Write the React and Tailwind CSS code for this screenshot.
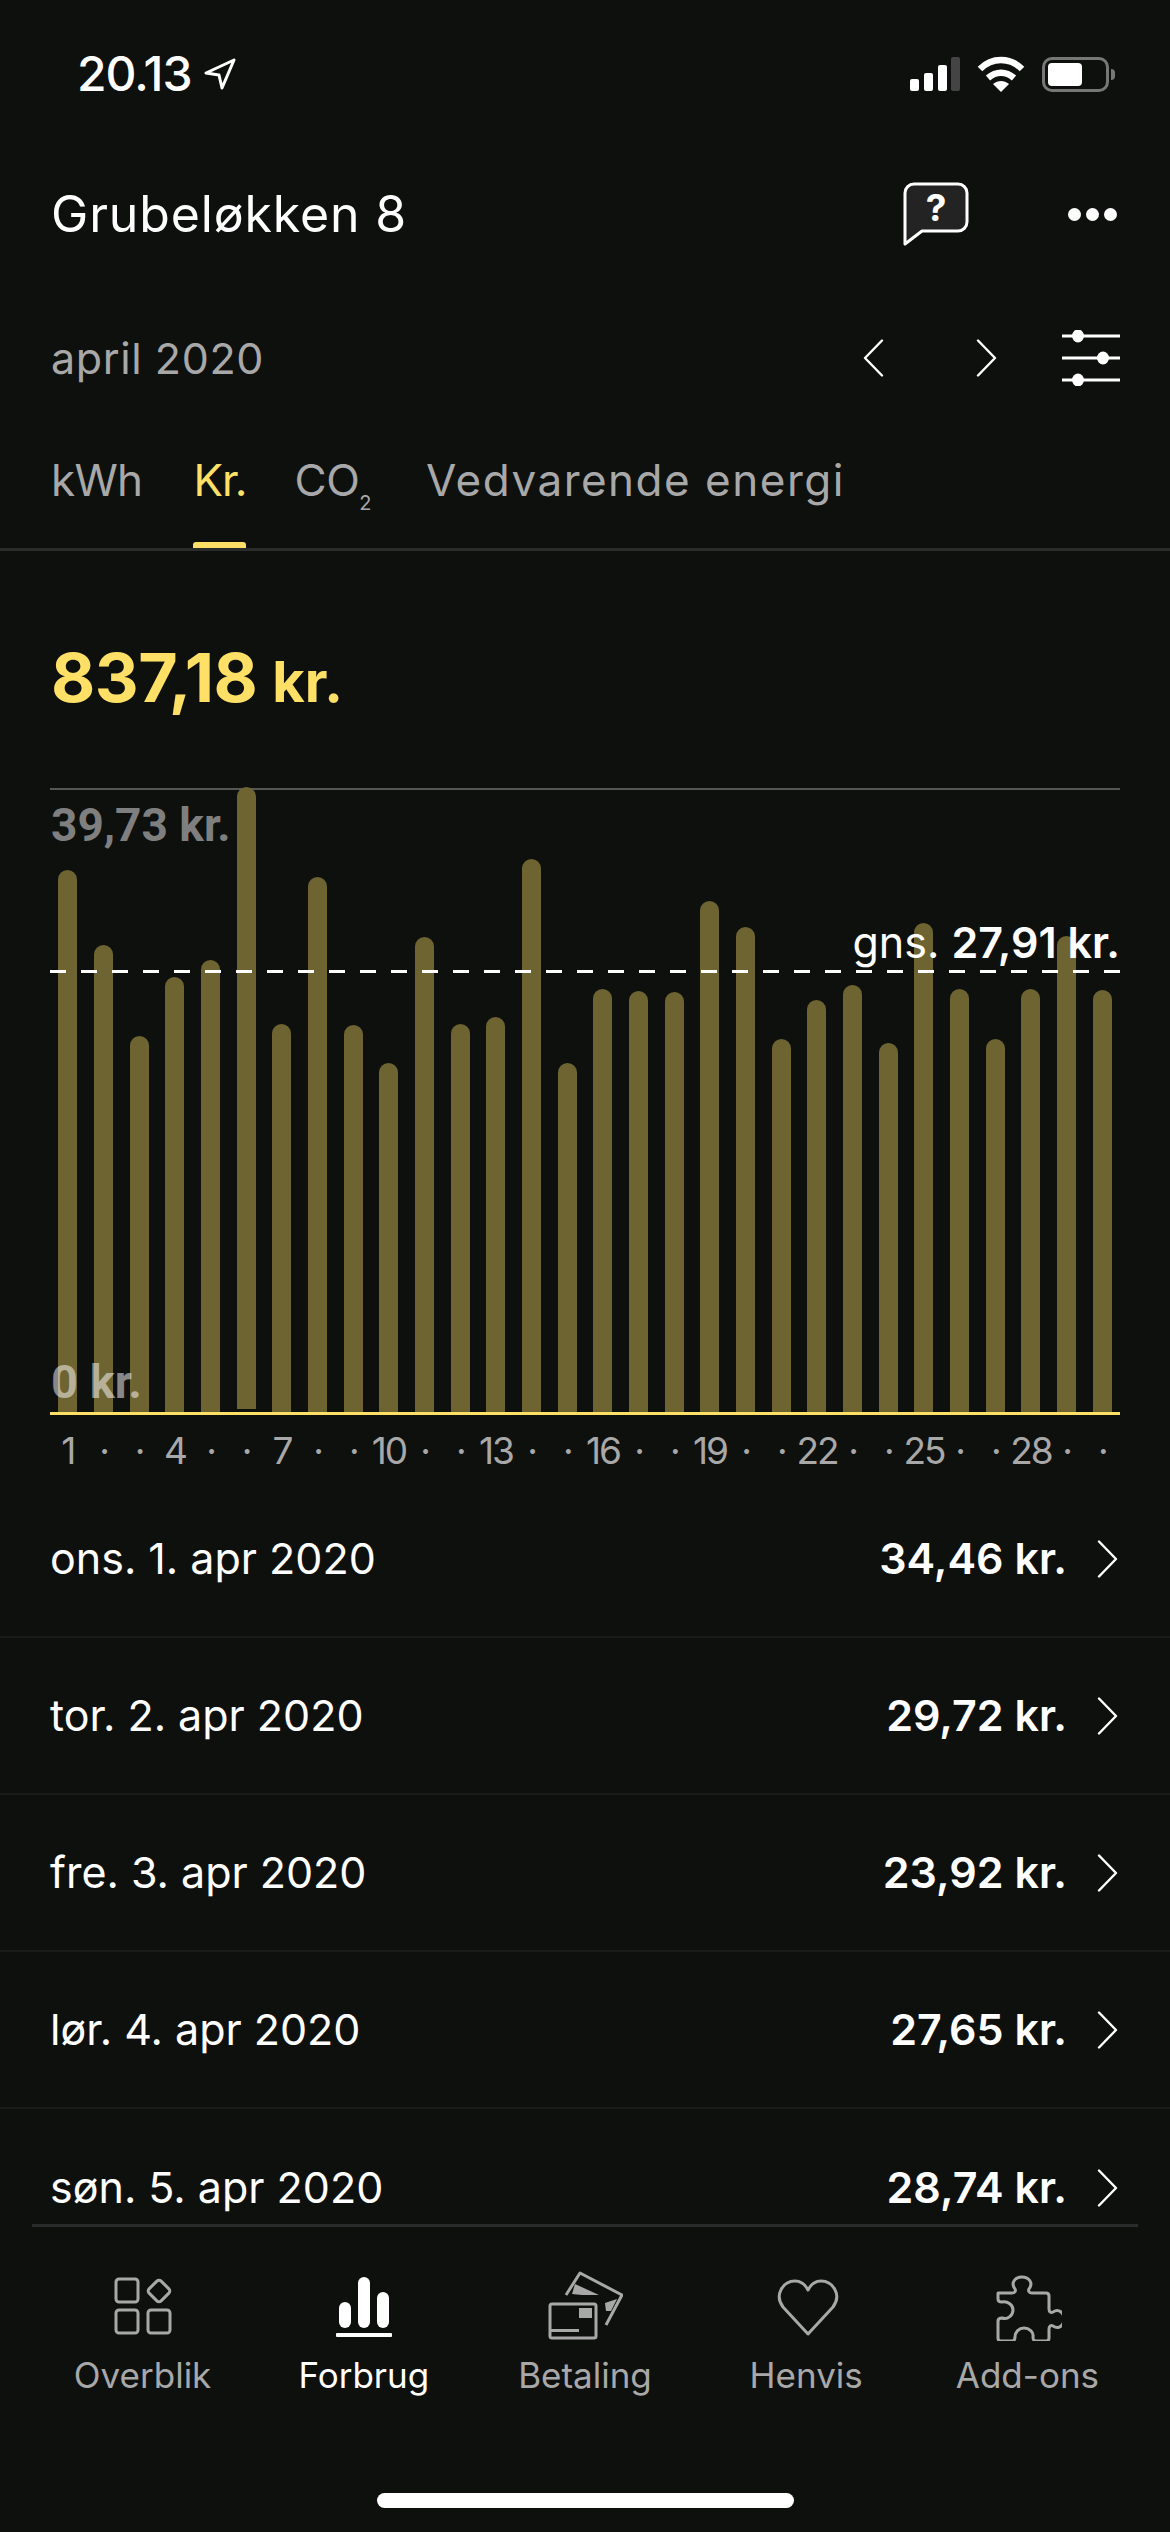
import React from "react";

// top edge (px on screen) of every bar in the chart, baseline sits at 1412
const BAR_TOPS = [870, 945, 1036, 977, 960, 788, 1024, 877, 1025, 1063, 937, 1024, 1017, 859, 1063, 989, 991, 992, 901, 927, 1039, 1000, 985, 1043, 923, 989, 1039, 989, 936, 990];

const DAYS = [
  ["ons. 1. apr 2020", "34,46 kr."],
  ["tor. 2. apr 2020", "29,72 kr."],
  ["fre. 3. apr 2020", "23,92 kr."],
  ["lør. 4. apr 2020", "27,65 kr."],
  ["søn. 5. apr 2020", "28,74 kr."],
];

const sans = "font-['Inter',sans-serif]";

function Chevron({ left = false, className = "" }) {
  return (
    <svg viewBox="0 0 21 38" className={`w-[21px] h-[38px] ${className}`} fill="none" stroke="currentColor" strokeWidth="2.4" strokeLinecap="round" strokeLinejoin="round">
      <path d={left ? "M19 1.5 2 19l17 17.5" : "M2 1.5 19 19 2 36.5"} />
    </svg>
  );
}

function StatusBar() {
  return (
    <div className="h-[148px] pl-[77px] pr-[55px] flex items-center justify-between text-white">
      <div className="flex items-center gap-[12px]">
        <span className="font-['Inter',sans-serif] text-[48px] font-medium tracking-[-1px]">20.13</span>
        <svg viewBox="0 0 32 32" className="w-[32px] h-[32px]" fill="none" stroke="white" strokeWidth="3" strokeLinejoin="round">
          <path d="M30 2 2 15l13 2 3 13z" />
        </svg>
      </div>
      <div className="flex items-center gap-[17px]">
        <svg viewBox="0 0 50 34" className="w-[50px] h-[34px]">
          <rect x="0" y="22" width="9" height="12" rx="2" fill="white" />
          <rect x="14" y="16" width="9" height="18" rx="2" fill="white" />
          <rect x="28" y="8" width="9" height="26" rx="2" fill="white" />
          <rect x="41" y="0" width="9" height="34" rx="2" fill="#444" />
        </svg>
        <svg viewBox="0 0 48 36" className="w-[48px] h-[36px]" fill="none" stroke="white" strokeWidth="6.5">
          <path d="M3 13C15 1 33 1 45 13" />
          <path d="M11 22c8-7 18-7 26 0" />
          <path d="M24 36l-8-8c5-4 11-4 16 0z" fill="white" stroke="none" />
        </svg>
        <div className="flex items-center gap-[2px]">
          <div className="w-[67px] h-[35px] rounded-[10px] border-[3px] border-[#777] p-[3px]">
            <div className="w-[34px] h-full rounded-[4px] bg-white" />
          </div>
          <div className="w-[4px] h-[11px] rounded-r-full bg-[#777]" />
        </div>
      </div>
    </div>
  );
}

function Tabs() {
  return (
    <div className={`h-[115px] px-[51px] border-b-[3px] border-[#2a2b2b] flex gap-[50px] text-[#a8a8a8] text-[44px] ${sans}`}>
      <span className="pt-[12px] leading-[64px] tracking-[-0.7px]">kWh</span>
      <span className="relative pt-[12px] ml-[1px] leading-[64px] text-[#ffe066] tracking-[-1px]">
        Kr.
        <span className="absolute left-0 right-0 bottom-0 h-[6px] rounded-t-[3px] bg-[#ffe066]" />
      </span>
      <span className="pt-[12px] leading-[64px] -ml-[2px] tracking-[-0.5px]">
        CO<span className="text-[20px] relative top-[14px]">2</span>
      </span>
      <span className="pt-[12px] ml-[5px] leading-[64px] tracking-[1.5px]">Vedvarende energi</span>
    </div>
  );
}

function Chart() {
  return (
    <div className="mx-[50px] relative h-[627px] border-t-[2px] border-[#565656] border-b-[3px] border-b-[#ffe066] flex items-end">
      {BAR_TOPS.map((top, i) => (
        <div key={i} className="flex-1 flex justify-center items-end">
          <div
            className={`w-[19px] bg-[#6d6431] rounded-t-full ${i === 5 ? "mb-[3px] rounded-b-[3px]" : ""}`}
            style={{ height: 1412 - Math.max(top, 790) }}
          />
        </div>
      ))}
      <span className="absolute left-[1px] top-[5px] font-['Roboto',sans-serif] font-bold text-[46px] leading-[60px] text-[#7f7f7f]">39,73 kr.</span>
      <span className="absolute left-[1px] bottom-[4px] font-['Roboto',sans-serif] font-bold text-[47px] leading-[52px] text-white/50">0 kr.</span>
      <span className={`absolute right-0 top-[122px] text-[43px] leading-[60px] text-white ${sans}`}>
        gns. <span className="font-semibold">27,91 kr.</span>
      </span>
      <svg className="absolute left-0 top-[180px] w-[1076px] h-[3px]" viewBox="0 0 1076 3">
        <line x1="0" y1="1.5" x2="1076" y2="1.5" stroke="white" strokeWidth="3" strokeDasharray="16 15" />
      </svg>
    </div>
  );
}

function Axis() {
  return (
    <div className={`mx-[50px] h-[66px] pt-[6px] flex items-center text-[#a8a8a8] text-[37px] tracking-[-2px] ${sans}`}>
      {BAR_TOPS.map((_, i) => (
        <div key={i} className="flex-1 min-w-0 flex justify-center">
          <span className="shrink-0">{i % 3 === 0 ? i + 1 : "·"}</span>
        </div>
      ))}
    </div>
  );
}

function DayRow({ date, amount, last }) {
  return (
    <div className={`h-[157px] shrink-0 pl-[50px] pr-[52px] flex items-center justify-between text-white text-[43px] ${sans} ${last ? "" : "border-b-[2px] border-[#1a1c1a]"}`}>
      <span>{date}</span>
      <div className="flex items-center gap-[30px]">
        <span className="font-semibold">{amount}</span>
        <Chevron />
      </div>
    </div>
  );
}

function NavItem({ label, active, children }) {
  return (
    <div className={`flex-1 flex flex-col items-center ${active ? "text-white" : "text-[#a8a8a8]"}`}>
      <div className="h-[72px] flex items-end justify-center">{children}</div>
      <span className={`mt-[11px] text-[35px] leading-[46px] ${sans}`}>{label}</span>
    </div>
  );
}

function BottomNav() {
  return (
    <div className="h-[308px] shrink-0 bg-[#0e100e] flex flex-col">
      <div className="mx-[32px] border-t-[3px] border-[#2a2b2b] pt-[42px] flex">
        <NavItem label="Overblik">
          <svg viewBox="0 0 58 58" className="w-[58px] h-[58px] mb-[6px]" fill="none" stroke="currentColor" strokeWidth="3">
            <rect x="2" y="2" width="22" height="23" rx="3" />
            <rect x="2" y="33" width="22" height="23" rx="3" />
            <rect x="34" y="33" width="22" height="23" rx="3" />
            <rect x="36.5" y="5.5" width="17" height="17" rx="3" transform="rotate(45 45 14)" />
          </svg>
        </NavItem>
        <NavItem label="Forbrug" active>
          <svg viewBox="0 0 56 60" className="w-[56px] h-[60px] mb-[4px]" fill="white">
            <rect x="3" y="25" width="12" height="26" rx="6" />
            <rect x="22" y="0" width="12" height="51" rx="6" />
            <rect x="41" y="15" width="12" height="36" rx="6" />
            <rect x="0" y="56" width="56" height="4" rx="1" />
          </svg>
        </NavItem>
        <NavItem label="Betaling">
          <svg viewBox="9 10 75 70" className="w-[75px] h-[70px]" fill="none" stroke="currentColor" strokeWidth="3" strokeLinejoin="round">
            <path d="M27 34 41 12l42 22-16 30" />
            <path d="M36 23l24 11H43l-10-1z" fill="currentColor" stroke="none" />
            <path d="M66 42l12-4-6 12h-5z" fill="currentColor" stroke="none" />
            <rect x="11" y="43" width="46" height="34" rx="2" />
            <rect x="40" y="47" width="13" height="10" fill="currentColor" stroke="none" />
            <path d="M12 69.5h28" />
          </svg>
        </NavItem>
        <NavItem label="Henvis">
          <svg viewBox="0 0 62 58" className="w-[62px] h-[58px] mb-[4px] ml-[3px]" fill="none" stroke="currentColor" strokeWidth="3" strokeLinejoin="round">
            <path d="M31 55 6 28C-3 16 6 2 18 2c6 0 10 3 13 9 3-6 7-9 13-9 12 0 21 14 12 26z" />
          </svg>
        </NavItem>
        <NavItem label="Add-ons">
          <svg viewBox="0 0 66 66" className="w-[66px] h-[66px] ml-[3px]" fill="none" stroke="currentColor" strokeWidth="3" strokeLinejoin="round">
            <path d="M2 18h14c3 0 4-2 3-4-5-7 1-12 7-12s12 5 7 12c-1 2 0 4 3 4h14c2 0 3 1 3 3v13c0 3 2 4 4 3 6-4 11 1 11 7s-5 11-11 7c-2-1-4 0-4 3v9c0 2-1 3-3 3H40c-3 0-3-2-3-4 1-5-4-9-9-9s-9 4-9 9c0 2-1 4-3 4H5c-2 0-3-1-3-3V46c0-2 2-3 4-3 6 2 11-3 11-8s-5-9-11-8c-2 0-4-1-4-3z" />
          </svg>
        </NavItem>
      </div>
      <div className="mt-auto mb-[24px] mx-auto w-[417px] h-[15px] rounded-full bg-white" />
    </div>
  );
}

export default function App() {
  return (
    <div className="w-[1170px] h-[2532px] bg-[#0e100e] flex flex-col overflow-hidden">
      <StatusBar />

      <div className={`h-[132px] pl-[51px] pr-[53px] flex items-center justify-between text-white text-[50px] tracking-[0.85px] ${sans}`}>
        <span>Grubeløkken 8</span>
        <div className="flex items-center gap-[99px]">
          <svg viewBox="0 0 66 64" className="w-[66px] h-[64px]">
            <path d="M2 62V11a9 9 0 0 1 9-9h44a9 9 0 0 1 9 9v29a9 9 0 0 1-9 9H19z" fill="#232323" stroke="white" strokeWidth="3" strokeLinejoin="round" />
            <text x="33" y="39" textAnchor="middle" fontFamily="Inter, sans-serif" fontWeight="700" fontSize="37" letterSpacing="0" fill="white">?</text>
          </svg>
          <div className="flex gap-[5px]">
            <div className="w-[13px] h-[13px] rounded-full bg-white" />
            <div className="w-[13px] h-[13px] rounded-full bg-white" />
            <div className="w-[13px] h-[13px] rounded-full bg-white" />
          </div>
        </div>
      </div>

      <div className={`h-[156px] pl-[51px] pr-[50px] flex items-center justify-between text-[#a8a8a8] text-[43px] tracking-[0.6px] ${sans}`}>
        <span>april 2020</span>
        <div className="flex items-center text-white">
          <Chevron left />
          <Chevron className="ml-[92px]" />
          <svg viewBox="0 0 58 56" className="w-[58px] h-[56px] ml-[65px]" fill="white">
            <rect x="0" y="4.5" width="58" height="3" />
            <rect x="0" y="26.5" width="58" height="3" />
            <rect x="0" y="48.5" width="58" height="3" />
            <ellipse cx="16" cy="6" rx="6" ry="6.5" />
            <ellipse cx="41" cy="28" rx="6" ry="6.5" />
            <ellipse cx="16" cy="50" rx="6" ry="6.5" />
          </svg>
        </div>
      </div>

      <Tabs />

      <div className={`h-[237px] pl-[51px] pt-[14px] flex items-center text-[#ffe066] ${sans}`}>
        <div className="flex items-baseline gap-[15px] font-bold">
          <span className="text-[68px] tracking-[-0.5px]">837,18</span>
          <span className="text-[56px]">kr.</span>
        </div>
      </div>

      <Chart />
      <Axis />

      <div className="flex-1 min-h-0 overflow-hidden flex flex-col">
        {DAYS.map(([date, amount], i) => (
          <DayRow key={date} date={date} amount={amount} last={i === DAYS.length - 1} />
        ))}
      </div>

      <BottomNav />
    </div>
  );
}
